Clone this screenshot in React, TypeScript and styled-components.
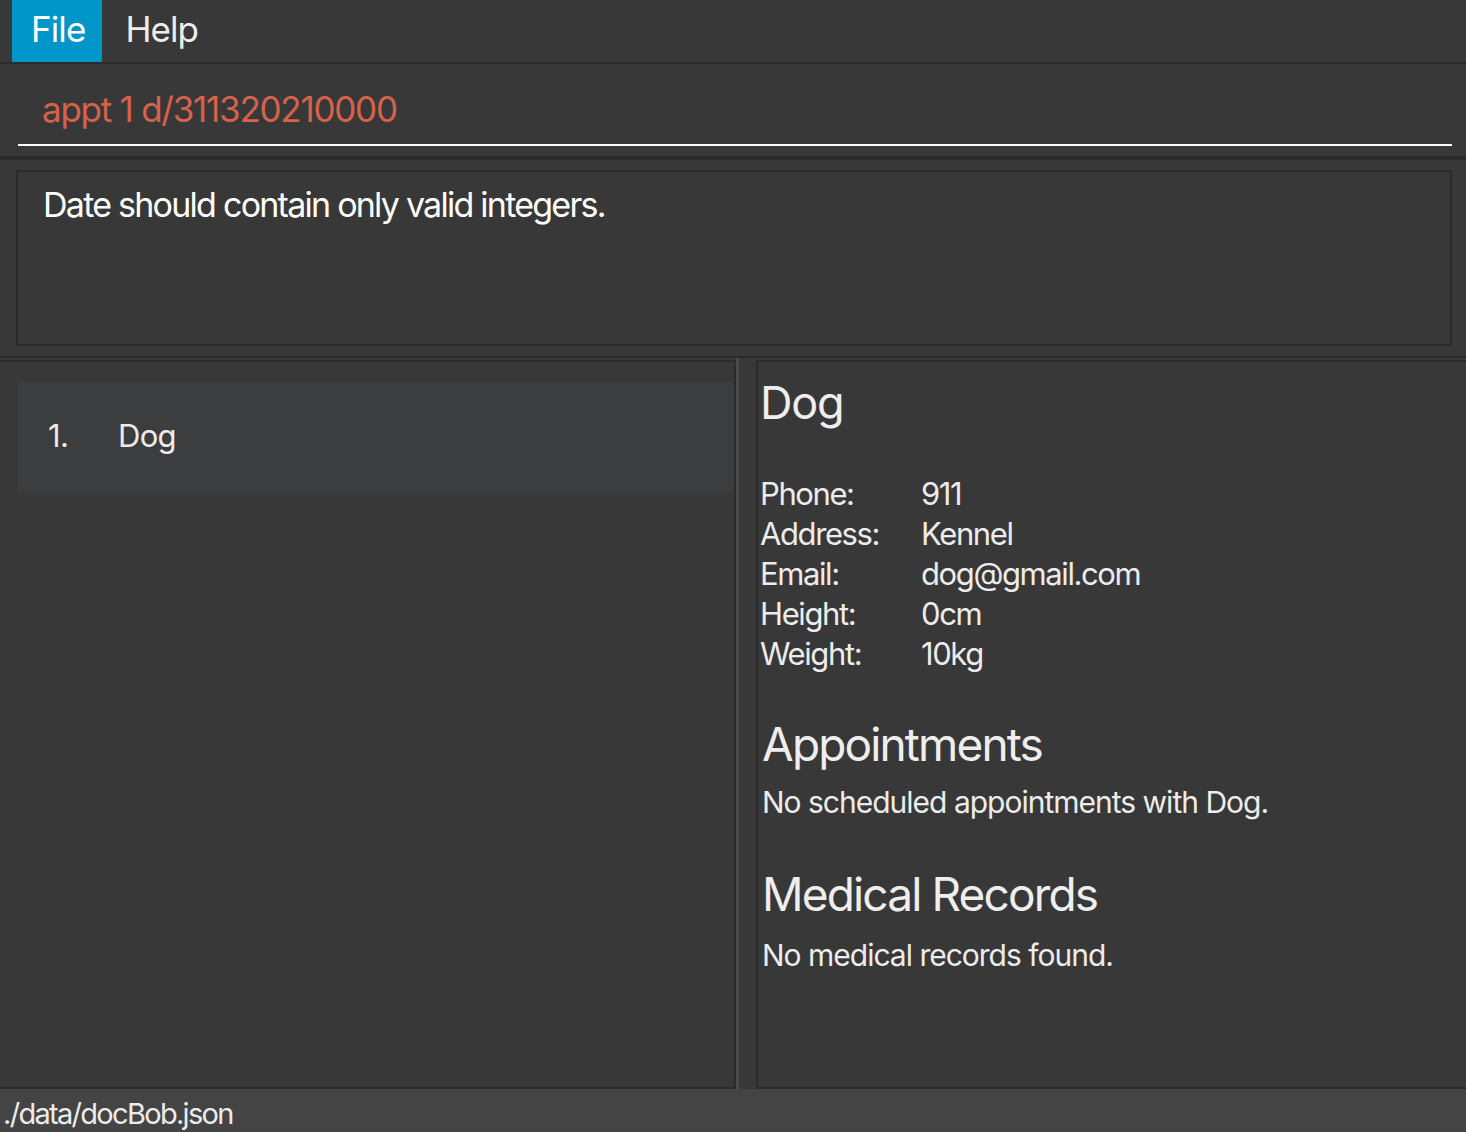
import React from "react";
import styled, { createGlobalStyle } from "styled-components";

const GlobalStyle = createGlobalStyle`
  html, body {
    margin: 0;
    padding: 0;
    background: #383838;
  }
  body {
    font-family: Inter, "Liberation Sans", sans-serif;
    overflow: hidden;
  }
  * { box-sizing: border-box; }
`;

const Window = styled.div`
  display: flex;
  flex-direction: column;
  width: 1466px;
  height: 1132px;
  background: #383838;
  color: #ececec;
`;

const MenuBar = styled.div`
  display: flex;
  align-items: stretch;
  height: 64px;
  padding-left: 12px;
  border-bottom: 2px solid #2b2b2b;
`;

const MenuItem = styled.div<{ $active?: boolean }>`
  display: flex;
  align-items: center;
  height: 62px;
  padding: 0 17px 4px ${(p) => (p.$active ? "19px" : "23px")};
  font-size: 35px;
  letter-spacing: -0.9px;
  color: ${(p) => (p.$active ? "#ffffff" : "#ededed")};
  background: ${(p) => (p.$active ? "#0096c9" : "transparent")};
`;

const CommandArea = styled.div`
  height: 96px;
  padding: 0 14px 0 18px;
  border-bottom: 4px solid #2b2b2b;
  display: flex;
  flex-direction: column;
`;

const CommandInput = styled.div`
  height: 82px;
  display: flex;
  align-items: flex-end;
  padding: 0 0 14px 24px;
  border-bottom: 2px solid #ffffff;
  font-size: 35px;
  letter-spacing: -1.25px;
  color: #d6624b;
`;

const ResultArea = styled.div`
  height: 198px;
  padding: 10px 14px 10px 16px;
  border-bottom: 2px solid #2b2b2b;
`;

const ResultBox = styled.div`
  height: 176px;
  border: 2px solid #2b2b2b;
  padding: 12px 25px;
  font-size: 34px;
  letter-spacing: -1.75px;
  color: #ffffff;
`;

const Main = styled.div`
  flex: 1;
  display: flex;
  padding-top: 2px;
  min-height: 0;
`;

const ListPanel = styled.div`
  width: 736px;
  border-top: 2px solid #2b2b2b;
  border-right: 2px solid #2b2b2b;
  border-bottom: 2px solid #2b2b2b;
  padding: 20px 0 0 18px;
`;

const Divider = styled.div`
  width: 3px;
  background: #4c4c4c;
  margin-top: -2px;
`;

const DetailPanel = styled.div`
  flex: 1;
  margin-left: 17px;
  border: 2px solid #2b2b2b;
  border-right: none;
  padding: 6px 0 0 2px;
  display: flex;
  flex-direction: column;
`;

const Card = styled.div`
  height: 110px;
  background: #3c3d3f;
  display: flex;
  align-items: center;
  padding-bottom: 4px;
  font-size: 31px;
  letter-spacing: -0.7px;
  color: #ececec;
`;

const Index = styled.span`
  width: 100px;
  padding-left: 30px;
`;

const Name = styled.h1`
  margin: 0;
  font-size: 45px;
  font-weight: 400;
  letter-spacing: -1.2px;
  color: #eeeeee;
  line-height: 70px;
`;

const FieldGrid = styled.div`
  display: grid;
  grid-template-columns: 161px 1fr;
  margin-top: 36px;
  font-size: 31px;
  letter-spacing: -1.4px;
  line-height: 40px;
  color: #ececec;
`;

const SectionTitle = styled.h2<{ $top: number }>`
  margin: ${(p) => p.$top}px 0 0 2px;
  font-size: 46px;
  font-weight: 400;
  letter-spacing: -1.85px;
  line-height: 56px;
  color: #eeeeee;
`;

const SectionText = styled.p<{ $top: number }>`
  margin: ${(p) => p.$top}px 0 0 2px;
  font-size: 30px;
  letter-spacing: -1px;
  line-height: 40px;
  color: #ececec;
`;

const StatusBar = styled.div`
  height: 43px;
  background: #444444;
  padding: 0 0 0 3px;
  display: flex;
  align-items: flex-end;
  font-size: 29px;
  letter-spacing: -1.7px;
  line-height: 36px;
  color: #ececec;
`;

const fields: [string, string][] = [
  ["Phone:", "911"],
  ["Address:", "Kennel"],
  ["Email:", "dog@gmail.com"],
  ["Height:", "0cm"],
  ["Weight:", "10kg"],
];

export default function App() {
  return (
    <>
      <GlobalStyle />
      <Window>
        <MenuBar>
          <MenuItem $active>File</MenuItem>
          <MenuItem>Help</MenuItem>
        </MenuBar>
        <CommandArea>
          <CommandInput>appt 1 d/311320210000</CommandInput>
        </CommandArea>
        <ResultArea>
          <ResultBox>Date should contain only valid integers.</ResultBox>
        </ResultArea>
        <Main>
          <ListPanel>
            <Card>
              <Index>1.</Index>
              <span>Dog</span>
            </Card>
          </ListPanel>
          <Divider />
          <DetailPanel>
            <Name>Dog</Name>
            <FieldGrid>
              {fields.map(([k, v]) => (
                <React.Fragment key={k}>
                  <span>{k}</span>
                  <span>{v}</span>
                </React.Fragment>
              ))}
            </FieldGrid>
            <SectionTitle $top={42}>Appointments</SectionTitle>
            <SectionText $top={10}>No scheduled appointments with Dog.</SectionText>
            <SectionTitle $top={44}>Medical Records</SectionTitle>
            <SectionText $top={13}>No medical records found.</SectionText>
          </DetailPanel>
        </Main>
        <StatusBar>./data/docBob.json</StatusBar>
      </Window>
    </>
  );
}
